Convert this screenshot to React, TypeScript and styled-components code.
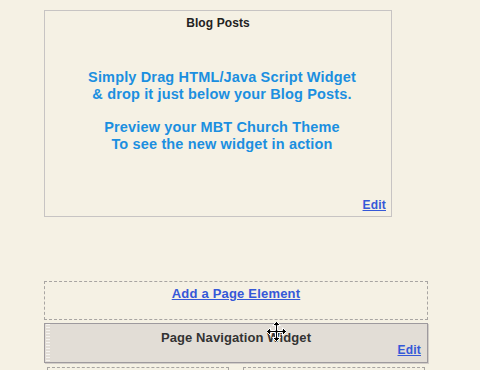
import React from "react";
import styled, { createGlobalStyle } from "styled-components";

const Global = createGlobalStyle`
  html, body {
    margin: 0;
    padding: 0;
    background: #f5f1e4;
    overflow: hidden;
  }
  body {
    font-family: "Liberation Sans", Arial, sans-serif;
  }
`;

const Column = styled.div`
  width: 384px;
  margin-left: 44px;
  display: flex;
  flex-direction: column;
  align-items: flex-start;
`;

const BlogBox = styled.section`
  box-sizing: border-box;
  width: 348px;
  height: 207px;
  margin-top: 10px;
  border: 1px solid #c7c4c3;
  padding: 5px 5px 5px 5px;
  display: flex;
  flex-direction: column;
`;

const BoxTitle = styled.div`
  text-align: center;
  font-weight: bold;
  font-size: 12px;
  line-height: 14px;
  letter-spacing: 0.1px;
  color: #222;
`;

const Message = styled.div`
  margin-top: 39px;
  margin-left: 36px;
  width: 272px;
  text-align: center;
  white-space: nowrap;
  font-weight: bold;
  font-size: 14.5px;
  line-height: 16.7px;
  letter-spacing: 0.15px;
  color: #1b8fe0;
`;

const Footer = styled.div`
  margin-top: auto;
  display: flex;
  justify-content: flex-end;
`;

const Link = styled.a<{ $size?: number }>`
  font-weight: bold;
  font-size: ${(p) => p.$size ?? 12}px;
  line-height: 12px;
  letter-spacing: 0.2px;
  color: #3558d8;
  text-decoration: underline;
  cursor: pointer;
`;

const AddBox = styled.div`
  box-sizing: border-box;
  width: 384px;
  height: 39px;
  margin-top: 64px;
  border: 1px dashed #a8a5a2;
  padding-top: 2px;
  text-align: center;
`;

const Widget = styled.div`
  position: relative;
  box-sizing: border-box;
  width: 384px;
  height: 40px;
  margin-top: 3px;
  border: 1px solid #9e9a9e;
  box-shadow: 1px 1px 0 #d2cdc8;
  padding: 8px 6px 0 6px;
  background:
    repeating-linear-gradient(to bottom, #f6f4f0 0 1px, transparent 1px 3px) 1px 0 / 4px 100% no-repeat,
    #e2ddd6;
  display: flex;
  flex-direction: column;
`;

const WidgetTitle = styled.div`
  text-align: center;
  font-weight: bold;
  font-size: 13px;
  line-height: 12px;
  letter-spacing: 0.1px;
  color: #333;
`;

const WidgetFooter = styled.div`
  display: flex;
  justify-content: flex-end;
`;

const MoveCursor = styled.svg`
  position: absolute;
  left: 221px;
  top: -3px;
  width: 21px;
  height: 21px;
`;

const Row = styled.div`
  display: flex;
  gap: 14px;
  margin-top: 4px;
  margin-left: 3px;
`;

const Slot = styled.div`
  box-sizing: border-box;
  width: 182px;
  height: 40px;
  border: 1px dashed #a8a5a2;
`;

export default function App() {
  return (
    <>
      <Global />
      <Column>
        <BlogBox>
          <BoxTitle>Blog Posts</BoxTitle>
          <Message>
            Simply Drag HTML/Java Script Widget
            <br />
            &amp; drop it just below your Blog Posts.
            <br />
            <br />
            Preview your MBT Church Theme
            <br />
            To see the new widget in action
          </Message>
          <Footer>
            <Link>Edit</Link>
          </Footer>
        </BlogBox>
        <AddBox>
          <Link $size={13}>Add a Page Element</Link>
        </AddBox>
        <Widget>
          <WidgetTitle>Page Navigation Widget</WidgetTitle>
          <WidgetFooter>
            <Link>Edit</Link>
          </WidgetFooter>
          <MoveCursor viewBox="0 0 21 21">
            <path
              d="M10.5 0.5 L14.5 4.5 L11.5 4.5 L11.5 9.5 L16.5 9.5 L16.5 6.5 L20.5 10.5 L16.5 14.5 L16.5 11.5 L11.5 11.5 L11.5 16.5 L14.5 16.5 L10.5 20.5 L6.5 16.5 L9.5 16.5 L9.5 11.5 L4.5 11.5 L4.5 14.5 L0.5 10.5 L4.5 6.5 L4.5 9.5 L9.5 9.5 L9.5 4.5 L6.5 4.5 Z"
              fill="#000"
              stroke="#fff"
              strokeWidth="1"
              strokeLinejoin="miter"
            />
          </MoveCursor>
        </Widget>
        <Row>
          <Slot />
          <Slot />
        </Row>
      </Column>
    </>
  );
}
